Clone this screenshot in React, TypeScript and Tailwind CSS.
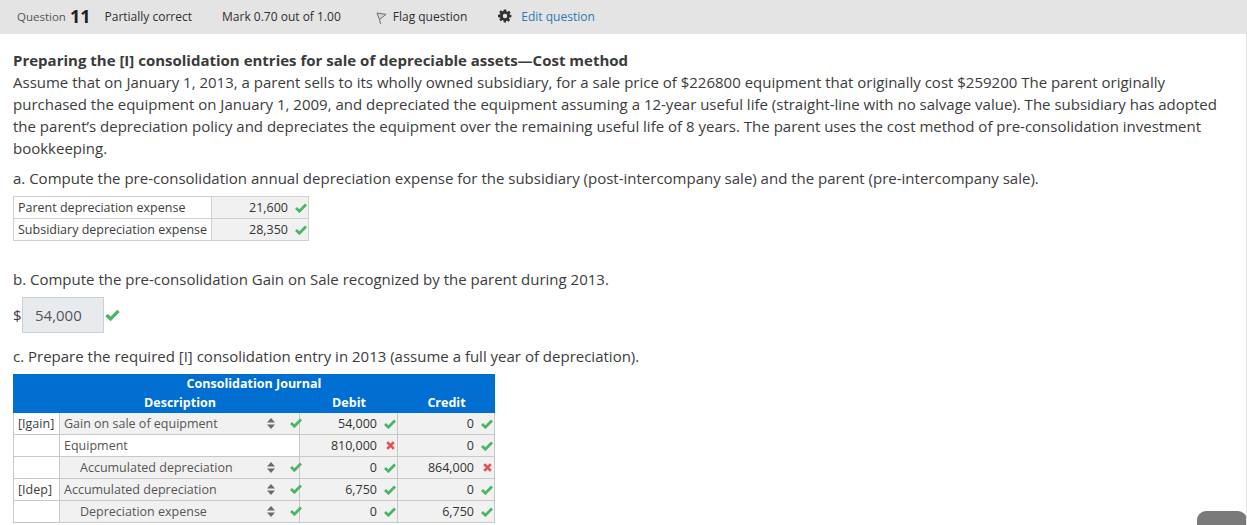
import React from "react";

const Check = ({ className = "" }: { className?: string }) => (
  <svg viewBox="0 0 12 10" className={"w-[12px] h-[10px] " + className}>
    <path d="M1 5 L4.4 8.2 L11 1.6" fill="none" stroke="#4cb564" strokeWidth="2.8" />
  </svg>
);
const Cross = () => (
  <svg viewBox="0 0 10 10" className="w-[9px] h-[9px]">
    <path d="M1.3 1.3 L8.7 8.7 M8.7 1.3 L1.3 8.7" fill="none" stroke="#e35252" strokeWidth="3" />
  </svg>
);
const Updown = () => (
  <svg viewBox="0 0 8 11" className="w-[8px] h-[11px]">
    <path d="M4 0 L8 4.4 H0 Z M4 11 L0 6.6 H8 Z" fill="#6b6b6b" />
  </svg>
);

const rows = [
  { tag: "[Igain]", desc: "Gain on sale of equipment", indent: false, sel: true, debit: "54,000", dOk: true, credit: "0", cOk: true },
  { tag: "", desc: "Equipment", indent: false, sel: false, debit: "810,000", dOk: false, credit: "0", cOk: true },
  { tag: "", desc: "Accumulated depreciation", indent: true, sel: true, debit: "0", dOk: true, credit: "864,000", cOk: false },
  { tag: "[Idep]", desc: "Accumulated depreciation", indent: false, sel: true, debit: "6,750", dOk: true, credit: "0", cOk: true },
  { tag: "", desc: "Depreciation expense", indent: true, sel: true, debit: "0", dOk: true, credit: "6,750", cOk: true },
];

const Amount = ({ value, ok }: { value: string; ok: boolean }) => (
  <div className="flex items-center justify-end h-full bg-[#f1f1f1] border-r border-[#c8c8c8] pr-[1px] text-[#333]">
    <span>{value}</span>
    <span className="w-[12px] ml-[7px] flex justify-center">{ok ? <Check /> : <Cross />}</span>
  </div>
);

export default function App() {
  return (
    <div className="relative w-[1247px] h-[525px] overflow-hidden bg-white border-r border-[#e4e4e4] font-['Open_Sans',sans-serif] text-[#3c3c3c]">
      <div className="h-[34px] bg-[#e4e4e4] flex items-center pl-[17px] text-[12px] text-[#2f2f2f]">
        <span className="text-[#555] text-[11.5px]">Question</span>
        <span className="ml-[4px] text-[18px] font-bold text-[#222] leading-none relative -top-[1px]">11</span>
        <span className="ml-[14px]">Partially correct</span>
        <span className="ml-[30px]">Mark 0.70 out of 1.00</span>
        <svg viewBox="0 0 12 14" className="ml-[35px] w-[11px] h-[13px] mt-[2px]">
          <path d="M1 1 L11 2.5 L6.5 6 L3.8 8 Z M3.8 8 L5 13" fill="#d4d4d4" stroke="#666" strokeWidth="1" />
        </svg>
        <span className="ml-[6px]">Flag question</span>
        <svg viewBox="0 0 24 24" className="ml-[31px] w-[14px] h-[14px] -mt-[2px]">
          <path
            fill="#333"
            fillRule="evenodd"
            d="M10 1h4l.6 3.1 1.7.7 2.6-1.8 2.8 2.8-1.8 2.6.7 1.7L23 10v4l-3.4.7-.7 1.7 1.8 2.6-2.8 2.8-2.6-1.8-1.7.7L14 23h-4l-.7-3.3-1.7-.7-2.7 1.8-2.8-2.8L3.9 16.4l-.7-1.7L0 14v-4l3.2-.6.7-1.7L2.1 5l2.8-2.8 2.7 1.8 1.7-.7L10 1Zm2 7.2a3.8 3.8 0 1 0 0 7.6 3.8 3.8 0 0 0 0-7.6Z"
          />
        </svg>
        <span className="ml-[9px] text-[#2a7ab0]">Edit question</span>
      </div>

      <div className="pl-[13px] pr-[12px] pt-[15px] text-[15px] leading-[22px]">
        <div className="font-bold h-[22px] text-[#3a3a3a]">Preparing the [I] consolidation entries for sale of depreciable assets—Cost method</div>
        <p>
          Assume that on January 1, 2013, a parent sells to its wholly owned subsidiary, for a sale price of $226800 equipment that originally cost $259200 The parent originally purchased the equipment on January 1, 2009, and depreciated the equipment assuming a 12-year useful life (straight-line with no salvage value). The subsidiary has adopted the parent’s depreciation policy and depreciates the equipment over the remaining useful life of 8 years. The parent uses the cost method of pre-consolidation investment bookkeeping.
        </p>
        <p className="mt-[8px]">a. Compute the pre-consolidation annual depreciation expense for the subsidiary (post-intercompany sale) and the parent (pre-intercompany sale).</p>

        <div className="mt-[7px] w-[296px] border-t border-l border-[#d0d0d0] text-[12.5px] leading-[21px]">
          {[["Parent depreciation expense", "21,600"], ["Subsidiary depreciation expense", "28,350"]].map(([label, val]) => (
            <div key={label} className="flex h-[22px] border-b border-[#d0d0d0]">
              <div className="w-[198px] pl-[4px] border-r border-[#d0d0d0]">{label}</div>
              <div className="flex-1 flex items-center justify-end bg-[#f1f1f1] border-r border-[#d0d0d0] pr-[1px] text-[#333]">
                <span>{val}</span>
                <Check className="ml-[7px]" />
              </div>
            </div>
          ))}
        </div>

        <p className="mt-[27px]">b. Compute the pre-consolidation Gain on Sale recognized by the parent during 2013.</p>

        <div className="mt-[7px] flex items-center h-[36px]">
          <span className="w-[9px]">$</span>
          <div className="w-[82px] h-[36px] bg-[#e7ebee] border border-[#ccd1d5] flex items-center pl-[12px] text-[#555]">54,000</div>
          <Check className="ml-[1px] !w-[15px] !h-[12px]" />
        </div>

        <p className="mt-[12px]">c. Prepare the required [I] consolidation entry in 2013 (assume a full year of depreciation).</p>

        <div className="mt-[7px] w-[482px] text-[12.5px]">
          <div className="bg-[#006fd1] text-white font-bold h-[39px]">
            <div className="text-center h-[19px] leading-[20px]">Consolidation Journal</div>
            <div className="grid grid-cols-[287px_98px_97px] h-[20px] leading-[20px]">
              <div className="text-center pl-[47px]">Description</div>
              <div className="text-center">Debit</div>
              <div className="text-center">Credit</div>
            </div>
          </div>
          {rows.map((r, i) => (
            <div key={i} className="grid grid-cols-[47px_240px_98px_97px] h-[22px] leading-[21px] border-b border-[#c8c8c8]">
              <div className="border-l border-r border-[#c8c8c8] pl-[4px]">{r.tag}</div>
              <div className={"relative flex items-center text-[#555] " + (r.sel ? "bg-[#f1f1f1]" : "bg-white") + " border-r border-[#c8c8c8]"}>
                <span className={r.indent ? "pl-[20px]" : "pl-[4px]"}>{r.desc}</span>
                {r.sel && (
                  <>
                    <span className="absolute left-[207px] top-[5px] flex"><Updown /></span>
                    <span className="absolute left-[230px] top-[5px] flex"><Check /></span>
                  </>
                )}
              </div>
              <Amount value={r.debit} ok={r.dOk} />
              <Amount value={r.credit} ok={r.cOk} />
            </div>
          ))}
        </div>
      </div>

      <div className="absolute -right-[1px] bottom-0 w-[50px] h-[14px] bg-[#7a7a7a] rounded-t-[9px]" />
    </div>
  );
}
